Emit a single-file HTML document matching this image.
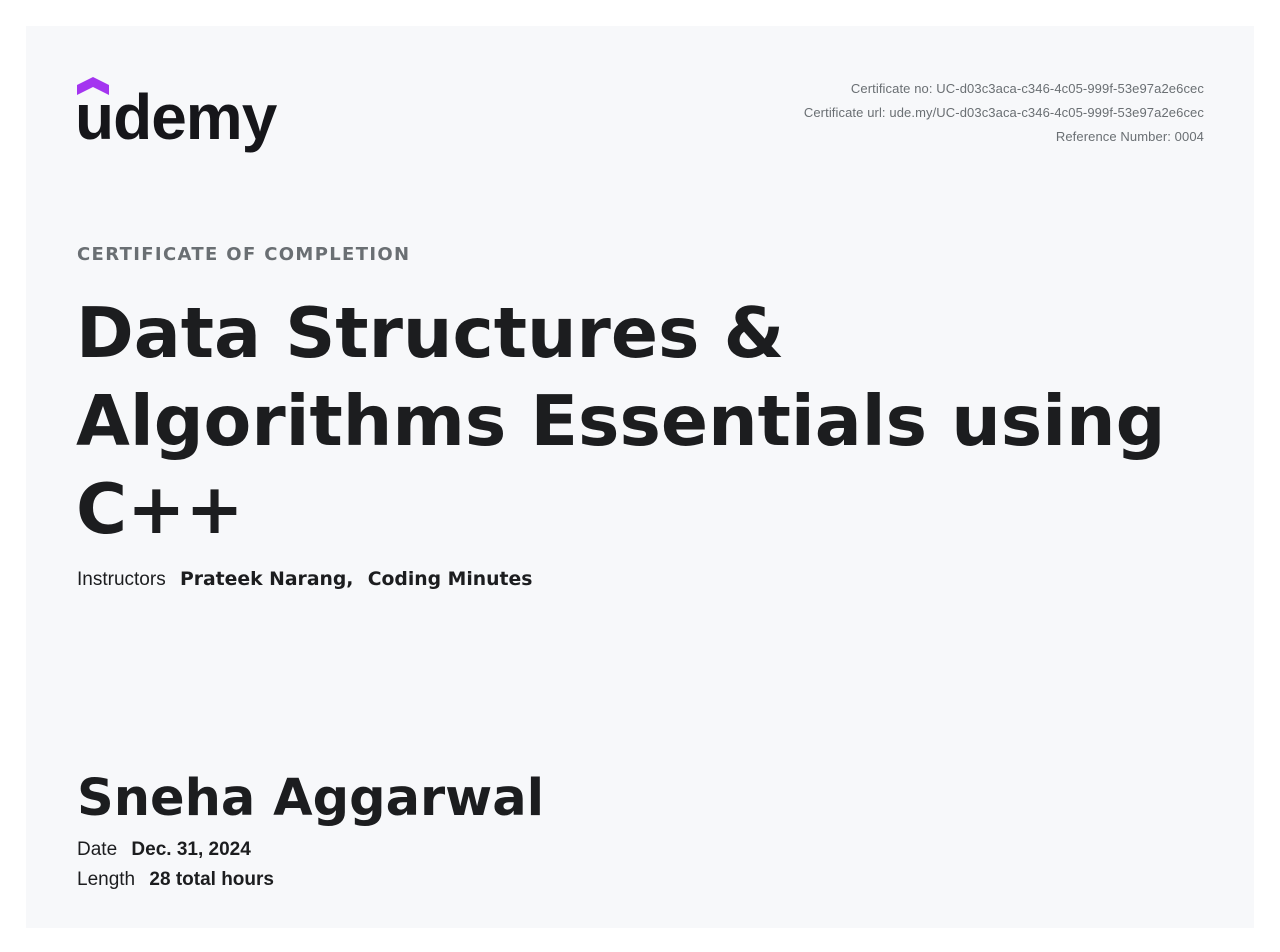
<!DOCTYPE html>
<html><head><style>
body{margin:0;background:#fff;width:1280px;height:952px;position:relative;font-family:"Liberation Sans",sans-serif;}
.card{position:absolute;left:26px;top:26px;width:1228px;height:902px;background:#f7f8fa;}
.abs{position:absolute;white-space:nowrap;}
.meta{right:50px;top:51px;text-align:right;font-size:13px;color:#6a6f73;line-height:24px;letter-spacing:0.1px;}
.logo{left:49px;top:54px;font-size:64px;font-weight:bold;color:#16161a;letter-spacing:-1px;}
.cc{left:51px;top:218px;font-size:18px;font-weight:bold;color:#6a6f73;letter-spacing:1.35px;font-family:"DejaVu Sans",sans-serif;}
.title{left:50px;top:264px;font-family:"DejaVu Sans",sans-serif;font-weight:bold;font-size:69.6px;line-height:88px;color:#1c1d1f;white-space:normal;width:1150px;}
.instr{left:51px;top:543px;font-size:19px;color:#1c1d1f;}
.instr b{margin-left:9px;font-family:"DejaVu Sans",sans-serif;font-size:18.8px;}
.name{left:51px;top:743px;font-family:"DejaVu Sans",sans-serif;font-weight:bold;font-size:51px;color:#1c1d1f;}
.info{left:51px;font-size:19px;color:#1c1d1f;}
.info b{margin-left:9px;}
</style></head><body>
<div class="card">
<div class="abs logo">udemy</div>
<svg class="abs" style="left:51px;top:51px" width="32" height="18" viewBox="0 0 32 18"><path d="M0 8 L16 0 L32 8 L32 18 L16 10 L0 18Z" fill="#a435f0"/></svg>
<div class="abs meta">Certificate no: UC-d03c3aca-c346-4c05-999f-53e97a2e6cec<br>Certificate url: ude.my/UC-d03c3aca-c346-4c05-999f-53e97a2e6cec<br>Reference Number: 0004</div>
<div class="abs cc">CERTIFICATE OF COMPLETION</div>
<div class="abs title">Data Structures &amp; Algorithms Essentials using C++</div>
<div class="abs instr">Instructors <b>Prateek Narang,</b> <b>Coding Minutes</b></div>
<div class="abs name">Sneha Aggarwal</div>
<div class="abs info" style="top:813px">Date <b>Dec. 31, 2024</b></div>
<div class="abs info" style="top:843px">Length <b>28 total hours</b></div>
</div>
</body></html>
